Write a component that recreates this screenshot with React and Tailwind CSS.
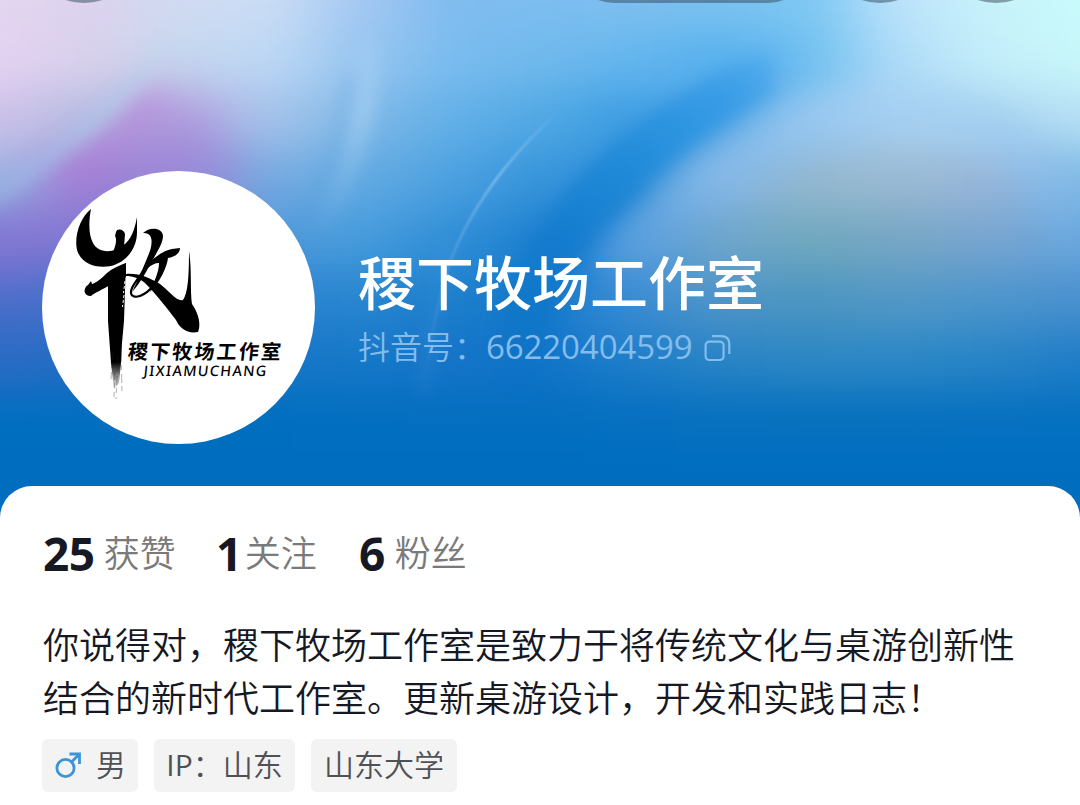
const BACKDROP = [
  ['#e3d6f0', '#dcd2ee', '#d0dcf2', '#cbddf5', '#a4c8f2', '#80bbef', '#7dbef0', '#7ebfef', '#7cc2f0', '#7cc7f2', '#bee3fc', '#c8f2fa', '#c8fafb'],
  ['#e4d2f2', '#d8d0ea', '#c5d6ee', '#bdd8f5', '#98c6f0', '#7abcef', '#70b9ec', '#64b6ee', '#55b0ee', '#70c0f0', '#b0dcf8', '#c4eefa', '#c8f8fa'],
  ['#ccc0e8', '#b4bce2', '#b8a8e0', '#a4c3ea', '#80b8e6', '#62b0e8', '#50a8e4', '#3a9ce2', '#5ba9e6', '#92c4ee', '#a8d0f0', '#a8d4f0', '#b5def5'],
  ['#98b4e2', '#a084d6', '#9890da', '#74aae0', '#62aae2', '#4ca0e0', '#3594da', '#3a92da', '#84b6e4', '#95b8cf', '#9bbad2', '#98b5da', '#7cbae6'],
  ['#7a78d4', '#7a78d2', '#6a88d4', '#5098da', '#469cdc', '#308ed6', '#1e80d0', '#559cde', '#6fa6cc', '#70a8bd', '#76a6c4', '#78a5d0', '#68a5dc'],
  ['#4a6eca', '#4570ca', '#3c78cc', '#2a80d0', '#2886d0', '#1c7ecc', '#167acc', '#3b8cd4', '#4f94c8', '#4b95c0', '#5298c6', '#4c95cc', '#4a90ce'],
  ['#2b6cc4', '#236cc4', '#1c70c6', '#1876c8', '#1678c8', '#1674c8', '#1274c8', '#1e7eca', '#2984c6', '#2c87c4', '#2b87c6', '#2884c6', '#1f7dc8'],
  ['#006ebf', '#006ebf', '#006ebf', '#006ebf', '#026ebf', '#036ebf', '#036ebf', '#056fc0', '#0670bf', '#0670be', '#0670be', '#0570c0', '#0470c0'],
];

function Wallpaper() {
  return (
    <svg className="absolute inset-0 h-full w-full" viewBox="0 0 1080 486" preserveAspectRatio="none" aria-hidden="true">
      <defs>
        <filter id="mesh" filterUnits="userSpaceOnUse" colorInterpolationFilters="sRGB" x="-250" y="-250" width="1580" height="1030">
          <feGaussianBlur stdDeviation="34 22" />
        </filter>
        <filter id="wide" filterUnits="userSpaceOnUse" colorInterpolationFilters="sRGB" x="-200" y="-200" width="1480" height="930">
          <feGaussianBlur stdDeviation="24" />
        </filter>
        <filter id="soft" filterUnits="userSpaceOnUse" colorInterpolationFilters="sRGB" x="-200" y="-200" width="1480" height="930">
          <feGaussianBlur stdDeviation="14" />
        </filter>
        <filter id="edge" filterUnits="userSpaceOnUse" colorInterpolationFilters="sRGB" x="-200" y="-200" width="1480" height="930">
          <feGaussianBlur stdDeviation="8" />
        </filter>
        <filter id="fine" filterUnits="userSpaceOnUse" x="-200" y="-200" width="1480" height="930">
          <feGaussianBlur stdDeviation="1" />
        </filter>
        <linearGradient id="band" gradientUnits="userSpaceOnUse" x1="790" y1="40" x2="520" y2="390">
          <stop offset="0" stopColor="#3a9fe9" stopOpacity="0" />
          <stop offset="0.2" stopColor="#349ae6" stopOpacity="0.9" />
          <stop offset="0.45" stopColor="#1f8ad8" />
          <stop offset="0.7" stopColor="#127acd" />
          <stop offset="1" stopColor="#0870c2" stopOpacity="0" />
        </linearGradient>
        <linearGradient id="haze" gradientUnits="userSpaceOnUse" x1="0" y1="30" x2="0" y2="240">
          <stop offset="0" stopColor="#c4e0fa" stopOpacity="0" />
          <stop offset="0.4" stopColor="#b4d8f6" />
          <stop offset="1" stopColor="#8cc0ec" stopOpacity="0" />
        </linearGradient>
        <linearGradient id="rim" gradientUnits="userSpaceOnUse" x1="0" y1="100" x2="0" y2="290">
          <stop offset="0" stopColor="#a8d2f4" />
          <stop offset="0.5" stopColor="#84b8ea" />
          <stop offset="1" stopColor="#5aa2e0" stopOpacity="0" />
        </linearGradient>
        <linearGradient id="streak" gradientUnits="userSpaceOnUse" x1="190" y1="30" x2="0" y2="220">
          <stop offset="0" stopColor="#b4d8ec" stopOpacity="0" />
          <stop offset="0.4" stopColor="#b0d0ec" />
          <stop offset="1" stopColor="#98bce6" stopOpacity="0.7" />
        </linearGradient>
        <linearGradient id="line" gradientUnits="userSpaceOnUse" x1="0" y1="110" x2="0" y2="380">
          <stop offset="0" stopColor="#a6d4f6" stopOpacity="0" />
          <stop offset="0.25" stopColor="#96ccf2" stopOpacity="0.7" />
          <stop offset="0.55" stopColor="#78b6ea" stopOpacity="0.35" />
          <stop offset="1" stopColor="#6faee6" stopOpacity="0" />
        </linearGradient>
      </defs>
      <rect width="1080" height="486" fill="#006dbf" />
      <g filter="url(#mesh)">
        <rect x="-250" y="420" width="1580" height="300" fill="#006dbf" />
        {BACKDROP.map((row, r) =>
          row.map((color, c) => (
            <rect
              key={`${r}-${c}`}
              x={c === 0 ? -200 : c * 90 - 45}
              y={r === 0 ? -180 : r * 60 - 30}
              width={c === 0 || c === 12 ? 246 : 91}
              height={r === 0 ? 211 : 61}
              fill={color}
            />
          )),
        )}
      </g>
      <path d="M165 95 C205 105 245 150 240 200 L120 200 L-20 290 L-20 230 C60 190 120 140 165 95 Z" fill="#9c72d2" opacity="0.36" filter="url(#wide)" />
      <path d="M160 95 L110 145 L60 180" fill="none" stroke="#b868d4" strokeWidth="22" opacity="0.4" filter="url(#soft)" />
      <path d="M170 45 C120 95 70 150 -20 205" fill="none" stroke="url(#streak)" strokeWidth="18" opacity="0.5" filter="url(#edge)" />
      <path d="M372 20 C368 120 350 185 308 245" fill="none" stroke="url(#haze)" strokeWidth="22" opacity="0.5" filter="url(#edge)" />
      <path d="M349 75 C346 135 330 180 300 225" fill="none" stroke="#4a94d8" strokeWidth="8" opacity="0.22" filter="url(#edge)" />
      <path d="M610 275 C660 220 720 165 800 130 C880 98 960 98 1020 150 C1050 180 1070 220 1080 260" fill="none" stroke="url(#rim)" strokeWidth="44" opacity="0.5" filter="url(#soft)" />
      <path d="M800 30 C690 85 560 170 515 260 C495 310 480 360 480 400 L530 400 C550 310 610 210 690 150 C730 120 770 100 810 80 Z" fill="url(#band)" opacity="0.55" filter="url(#soft)" />
      <path d="M775 92 C690 138 610 205 572 260 C548 300 535 350 522 390 L492 390 C500 300 540 210 600 160 C640 120 700 80 770 50 Z" fill="url(#band)" opacity="0.85" filter="url(#edge)" />
      <path d="M640 188 C600 222 572 260 552 300 L530 360" fill="none" stroke="#0f76ca" strokeWidth="10" opacity="0.25" filter="url(#edge)" />
      <path d="M558 112 C505 160 470 210 450 262 C435 310 428 350 424 395" fill="none" stroke="url(#line)" strokeWidth="2.4" filter="url(#fine)" />
      <path d="M450 240 C437 290 428 340 424 395" fill="none" stroke="#7bb4ea" strokeWidth="9" opacity="0.14" filter="url(#edge)" />
      <g fill="#34495b" fillOpacity="0.5">
        <circle cx="84" cy="-55" r="58" />
        <rect x="572" y="-87" width="238" height="90" rx="42" />
        <circle cx="880" cy="-55" r="58" />
        <circle cx="996" cy="-55" r="58" />
      </g>
    </svg>
  );
}

function BrushMark() {
  return (
    <svg className="absolute inset-0 h-full w-full" viewBox="0 0 273 273" aria-hidden="true">
      <defs>
        <linearGradient id="ink" x1="0" y1="0" x2="0" y2="1">
          <stop offset="0" stopColor="#000" />
          <stop offset="0.78" stopColor="#000" />
          <stop offset="0.9" stopColor="#000" stopOpacity="0.4" />
          <stop offset="1" stopColor="#000" stopOpacity="0.03" />
        </linearGradient>
      </defs>
      <g fill="#000">
        <path d="M49 38 C38 47 32 65 35 79 C39 92 53 98 69 95 C85 91 95 77 95 61 L95 46 C92 63 87 72 77 77 C66 83 55 80 51 72 C46 63 47 48 49 38 Z" />
        <path d="M74 61 C75 57 82 58 83 63 L82 76 C79 80 75 81 71 81 C74 74 75 68 73 65 Z" />
        <path d="M84 92 C78 94 71 97 65 102 C60 107 54 112 50 113 L49 110 L46 114 C41 117 41 125 49 125 C54 121 60 119 68 114 L84 106 Z" />
        <path d="M101 62 C108 55 121 57 121 65 C121 73 113 84 108 94 C102 105 95 116 90 121 C96 109 101 97 106 85 C111 74 112 61 101 62 Z" />
        <path d="M107 91 C114 86 122 79 130 78 L138 77 C138 83 132 86 126 87 C125 96 118 111 108 121 C112 111 117 101 117 92 C113 92 109 94 106 97 Z" />
        <path d="M84 103 C98 102 107 107 118 113 C128 121 135 131 141 129 C146 122 147 104 147 80 C150 98 148 120 150 133 C157 143 159 154 156 161 C146 163 138 158 134 149 C125 137 114 123 103 112 C97 107 91 105 84 105 Z" />
      </g>
      <path d="M108 88 C104 99 94 108 90 117 C86 126 94 128 102 123 C111 118 117 107 120 92" fill="none" stroke="#000" strokeWidth="2.2" />
      <path d="M66 104 L84 92 L83 120 L82 150 L80 172 L79 192 L77 212 L72 219 L69 192 L66 150 Z" fill="url(#ink)" />
      <path d="M71 180 L69 208 M76 184 L74 228 M79 182 L80 222 M73 200 L72 226" fill="none" stroke="#222" strokeWidth="1.2" strokeDasharray="9 3 5 4" opacity="0.3" />
      <path d="M83 110 L81.500 122 M82 124 L80.500 136" fill="none" stroke="#fff" strokeWidth="1" strokeDasharray="3 2" />
    </svg>
  );
}

function Avatar() {
  return (
    <div className="relative h-[273px] w-[273px] shrink-0 overflow-hidden rounded-full bg-white text-black">
      <BrushMark />
      <div className="absolute left-[86px] top-[168px] -skew-x-6 whitespace-nowrap font-['Noto_Sans_CJK_SC',sans-serif] text-[20px] font-bold leading-[24px] tracking-[2.2px]">
        稷下牧场工作室
      </div>
      <div className="absolute left-[102px] top-[190px] -skew-x-6 whitespace-nowrap font-['Noto_Sans',sans-serif] text-[14.5px] font-medium leading-[18px] tracking-[1.3px]">
        JIXIAMUCHANG
      </div>
    </div>
  );
}

function CopyIcon() {
  return (
    <svg className="h-7 w-7" viewBox="0 0 28 28" fill="none" stroke="currentColor" strokeWidth="2.2" aria-hidden="true">
      <rect x="1.600" y="7.600" width="18" height="18.400" rx="3.800" />
      <path d="M8 2.200 H17.500 Q25.300 2.200 25.300 10 V20" />
    </svg>
  );
}

function MaleIcon() {
  return (
    <svg className="h-7 w-7" viewBox="0 0 28 28" fill="none" stroke="#3d94d6" strokeWidth="2.8" aria-hidden="true">
      <circle cx="11.500" cy="17" r="8.600" />
      <path d="M17.500 11 L25.500 3 M15.500 3 H25.500 V13" />
    </svg>
  );
}

function Stat({ value, label, className }) {
  return (
    <div className={`flex items-center ${className}`}>
      <span className="font-['Noto_Sans',sans-serif] text-[46px] font-bold tracking-[-0.5px] text-[#161823]">{value}</span>
      <span className="pt-0.5 text-[36px] font-[350] text-[#7a7a7a]">{label}</span>
    </div>
  );
}

function Tag({ className, children }) {
  return (
    <div className={`flex h-[53px] items-center justify-center whitespace-nowrap rounded-md bg-[#f3f3f4] pb-0.5 text-[30px] font-[350] leading-none text-[#505156] ${className}`}>
      {children}
    </div>
  );
}

export default function App() {
  return (
    <div className="flex h-[805px] w-[1080px] flex-col overflow-hidden bg-[#006dbf] font-['Open_Sans','Noto_Sans_CJK_SC',sans-serif]">
      <header className="relative h-[486px] shrink-0">
        <Wallpaper />
        <div className="relative flex pl-[42px] pt-[171px]">
          <Avatar />
          <div className="ml-[43px] flex flex-col pt-[73px]">
            <h1 className="whitespace-nowrap font-['Noto_Sans_CJK_SC',sans-serif] text-[58px] font-medium leading-[72px] text-white">
              稷下牧场工作室
            </h1>
            <div className="flex items-center whitespace-nowrap text-[#84bdec]">
              <span className="pb-[3px] font-['Noto_Sans_CJK_SC',sans-serif] text-[32px] font-[350] leading-[57px]">抖音号：</span>
              <span className="pt-px text-[33px] font-normal leading-[60px] tracking-[-0.1px]">66220404599</span>
              <span className="ml-3 pt-0.5">
                <CopyIcon />
              </span>
            </div>
          </div>
        </div>
      </header>
      <main className="flex-1 rounded-t-[32px] bg-white pl-[43px] pt-9">
        <div className="flex h-[62px] items-center leading-[62px]">
          <Stat value="25" label="获赞" className="w-[173px] gap-[9px]" />
          <Stat value="1" label="关注" className="w-[143px] gap-[3px]" />
          <Stat value="6" label="粉丝" className="gap-[10px]" />
        </div>
        <p className="mt-[33px] whitespace-nowrap font-['Noto_Sans_CJK_SC',sans-serif] text-[36px] font-[350] leading-[53px] text-[#161823]">
          你说得对，稷下牧场工作室是致力于将传统文化与桌游创新性
          <br />
          结合的新时代工作室。更新桌游设计，开发和实践日志！
        </p>
        <div className="-ml-px mt-[16px] flex">
          <Tag className="w-[96px] gap-[14px]">
            <MaleIcon />
            <span>男</span>
          </Tag>
          <Tag className="ml-4 w-[141px]">
            <span className="font-normal">IP</span>：山东
          </Tag>
          <Tag className="ml-4 w-[146px]">山东大学</Tag>
        </div>
      </main>
    </div>
  );
}
